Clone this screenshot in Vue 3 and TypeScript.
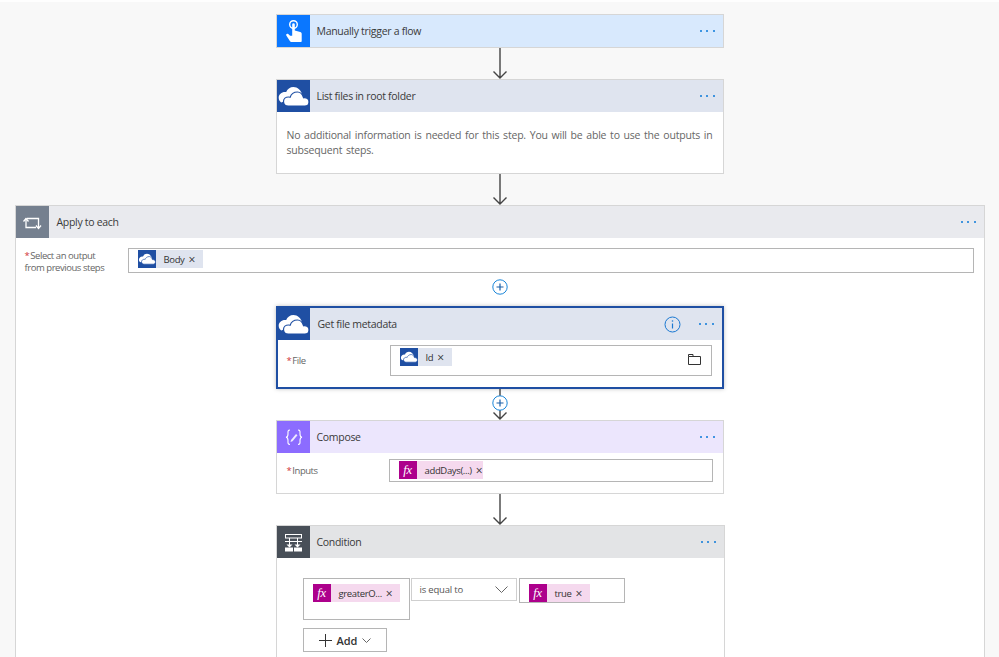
<script setup lang="ts">
const dots = [1, 2, 3]
</script>

<template>
  <div class="page">
    <svg class="defs" width="0" height="0">
      <symbol id="cloud" viewBox="0 0 33 33">
        <path d="M16.500 7c-3.400 0-6.300 2-7.300 5-.4-.1-.8-.1-1.200-.1-3.600 0-6.300 2.500-6.300 5.800 0 2 1 3.700 2.500 4.800l13.500-5 7.500-3c-1-4-4.700-7.500-8.700-7.500z" fill="#fff" />
        <path d="M20.500 12c-3.600 0-6.500 2.300-7.400 5.300-.5-.2-1-.3-1.600-.3-2.800 0-5 2-5 4.500 0 2.700 2 4.500 4.700 4.500h16.600c2.600 0 4.200-1.900 4.200-4.100 0-2.500-1.900-4.300-4.700-4.300-.3 0-.6 0-.8.1-1-3.300-3.100-5.700-6-5.700z" fill="#fff" stroke="currentColor" stroke-width="1.200" />
      </symbol>
    </svg>

    <section class="card trigger short">
      <header class="head">
        <span class="icon">
          <svg viewBox="0 0 33 33" width="33" height="33">
            <circle cx="16.500" cy="9.500" r="3.800" fill="none" stroke="#fff" stroke-width="1.400" />
            <path d="M15.200 9.500a1.300 1.300 0 0 1 2.600 0v6l5.400 1.500c1 .3 1.500 1 1.500 2V26c0 .6-.4 1-1 1h-9.500c-.4 0-.7-.2-1-.5l-3.900-6c-.6-1.100.8-2.300 1.900-1.400l1.900 1.600 2.100 0z" fill="#fff" />
          </svg>
        </span>
        <span class="title">Manually trigger a flow</span>
        <span class="dots"><i v-for="d in dots" :key="d"></i></span>
      </header>
    </section>

    <div class="link">
      <svg width="16" height="31" viewBox="0 0 16 31"><path d="M8 0v30M1.500 23.500 8 30l6.500-6.500" fill="none" stroke="#444" stroke-width="1.400" /></svg>
    </div>

    <section class="card onedrive">
      <header class="head">
        <span class="icon"><svg width="33" height="33"><use href="#cloud" /></svg></span>
        <span class="title">List files in root folder</span>
        <span class="dots"><i v-for="d in dots" :key="d"></i></span>
      </header>
      <p class="note">No additional information is needed for this step. You will be able to use the outputs in subsequent steps.</p>
    </section>

    <div class="link">
      <svg width="16" height="31" viewBox="0 0 16 31"><path d="M8 0v30M1.500 23.500 8 30l6.500-6.500" fill="none" stroke="#444" stroke-width="1.400" /></svg>
    </div>

    <section class="card loop">
      <header class="head">
        <span class="icon">
          <svg viewBox="0 0 33 33" width="33" height="33">
            <path d="M10 12.500V21.500H20M11 12.500H22.500V22" fill="none" stroke="#fff" stroke-width="1.300" />
            <path d="M7.500 15.500 10 12.500l2.500 3M20 19.500l2.500 3 2.500-3" fill="none" stroke="#fff" stroke-width="1.300" />
          </svg>
        </span>
        <span class="title">Apply to each</span>
        <span class="dots"><i v-for="d in dots" :key="d"></i></span>
      </header>

      <div class="row">
        <label class="lab"><b>*</b>Select an output<br />from previous steps</label>
        <div class="field body-field">
          <span class="chip blue">
            <span class="chip-icon"><svg width="18" height="18" viewBox="0 0 33 33"><use href="#cloud" /></svg></span>
            <span class="chip-text">Body</span><span class="x">×</span>
          </span>
        </div>
      </div>

      <div class="plus first">
        <svg width="16" height="16" viewBox="0 0 16 16"><circle cx="8" cy="8" r="7.200" fill="#fff" stroke="#1a86d9" /><path d="M8 4.500v7M4.500 8h7" stroke="#1a5fa8" stroke-width="1.200" /></svg>
      </div>

      <section class="card onedrive selected">
        <header class="head">
          <span class="icon"><svg width="33" height="33"><use href="#cloud" /></svg></span>
          <span class="title">Get file metadata</span>
          <svg class="info" width="17" height="17" viewBox="0 0 17 17"><circle cx="8.500" cy="8.500" r="7.500" fill="none" stroke="#1a78d2" stroke-width="1" /><path d="M8.500 7.500v5" stroke="#1a78d2" stroke-width="1.200" /><circle cx="8.500" cy="5" r=".8" fill="#1a78d2" /></svg>
          <span class="dots"><i v-for="d in dots" :key="d"></i></span>
        </header>
        <div class="row">
          <label class="lab"><b>*</b>File</label>
          <div class="field file-field">
            <span class="chip blue">
              <span class="chip-icon"><svg width="18" height="18" viewBox="0 0 33 33"><use href="#cloud" /></svg></span>
              <span class="chip-text">Id</span><span class="x">×</span>
            </span>
            <svg class="folder" width="13" height="11" viewBox="0 0 13 11"><path d="M.5 2.500h12v8H.5zM.5 2.500V.5h4.500v2" fill="none" stroke="#333" /></svg>
          </div>
        </div>
      </section>

      <div class="link with-plus">
        <svg width="16" height="31" viewBox="0 0 16 31"><path d="M8 0v30M1.500 23.500 8 30l6.500-6.500" fill="none" stroke="#444" stroke-width="1.400" /></svg>
        <svg class="mid-plus" width="16" height="16" viewBox="0 0 16 16"><circle cx="8" cy="8" r="7.200" fill="#fff" stroke="#1a86d9" /><path d="M8 4.500v7M4.500 8h7" stroke="#1a5fa8" stroke-width="1.200" /></svg>
      </div>

      <section class="card compose">
        <header class="head">
          <span class="icon">
            <svg viewBox="0 0 33 33" width="33" height="33">
              <g transform="translate(.5 -.5)">
                <path d="M12.500 9.500c-2.500 0-2 2-2 4s-.3 3-2 3.200c1.700.2 2 1.200 2 3.200s-.5 4 2 4M20.500 9.500c2.500 0 2 2 2 4s.3 3 2 3.200c-1.700.2-2 1.200-2 3.200s.5 4-2 4" fill="none" stroke="#fff" stroke-width="1.100" />
                <path d="M13.500 19.500l5-6 1.500 1.300-5 6-2 .7z" fill="#fff" opacity=".85" />
              </g>
            </svg>
          </span>
          <span class="title">Compose</span>
          <span class="dots"><i v-for="d in dots" :key="d"></i></span>
        </header>
        <div class="row">
          <label class="lab"><b>*</b>Inputs</label>
          <div class="field inputs-field">
            <span class="chip pink">
              <span class="chip-icon fx">fx</span>
              <span class="chip-text">addDays(...)</span><span class="x tight">×</span>
            </span>
          </div>
        </div>
      </section>

      <div class="link">
        <svg width="16" height="31" viewBox="0 0 16 31"><path d="M8 0v30M1.500 23.500 8 30l6.500-6.500" fill="none" stroke="#444" stroke-width="1.400" /></svg>
      </div>

      <section class="card condition">
        <header class="head">
          <span class="icon">
            <svg viewBox="0 0 33 33" width="33" height="33">
              <rect x="8.500" y="8.500" width="16" height="3.500" fill="none" stroke="#fff" />
              <path d="M12.500 12v7M20.500 12v7M8 15.500h17" fill="none" stroke="#fff" />
              <path d="M9.500 18.500h6l-3 3zM17.500 18.500h6l-3 3z" fill="#fff" />
              <rect x="8" y="21.500" width="8" height="4" fill="#fff" />
              <rect x="17" y="21.500" width="8" height="4" fill="#fff" />
            </svg>
          </span>
          <span class="title">Condition</span>
          <span class="dots"><i v-for="d in dots" :key="d"></i></span>
        </header>
        <div class="rule">
          <div class="cell tall">
            <span class="chip pink">
              <span class="chip-icon fx">fx</span>
              <span class="chip-text">greaterO...</span><span class="x">×</span>
            </span>
          </div>
          <div class="select">
            <span>is equal to</span>
            <svg width="13" height="7" viewBox="0 0 13 7"><path d="M.5.500l6 6 6-6" fill="none" stroke="#666" /></svg>
          </div>
          <div class="cell">
            <span class="chip pink">
              <span class="chip-icon fx">fx</span>
              <span class="chip-text">true</span><span class="x">×</span>
            </span>
          </div>
        </div>
        <button class="add" type="button">
          <svg width="13" height="13" viewBox="0 0 13 13"><path d="M6.500 0v13M0 6.500h13" stroke="#333" /></svg>
          <span>Add</span>
          <svg width="9" height="5" viewBox="0 0 9 5"><path d="M.5.500l4 4 4-4" fill="none" stroke="#666" /></svg>
        </button>
      </section>
    </section>
  </div>
</template>

<style>
html,
body {
  margin: 0;
  overflow: hidden;
}
</style>

<style scoped>
.page {
  box-sizing: border-box;
  width: 999px;
  height: 657px;
  overflow: hidden;
  padding-top: 12px;
  border-top: 2px solid #fefefe;
  background: #f8f8f8;
  display: flex;
  flex-direction: column;
  align-items: center;
  font-family: "Open Sans", "Liberation Sans", sans-serif;
  color: #333;
}
.defs {
  position: absolute;
}
.card {
  box-sizing: border-box;
  flex: none;
  width: 448px;
  background: #fff;
  border: 1px solid #d6d6d6;
}
.head {
  display: flex;
  align-items: center;
  height: 32px;
}
.icon {
  flex: none;
  width: 33px;
  height: 32px;
  color: #1f4fa3;
  overflow: hidden;
}
.icon svg {
  display: block;
}
.title {
  flex: 1;
  margin-left: 7px;
  font-size: 10.500px;
  letter-spacing: -0.3px;
  color: #3a3a3a;
}
.loop > .head .title,
.selected .title {
  margin-left: 8px;
}
.info {
  flex: none;
  margin-right: 18px;
}
.dots {
  display: flex;
  gap: 4.300px;
  margin-right: 8px;
}
.dots i {
  width: 2px;
  height: 2px;
  border-radius: 50%;
  background: #0a78d8;
}
.trigger .head {
  background: #d8e9fd;
}
.trigger .icon {
  background: #0a77ff;
}
.onedrive .head {
  background: #dfe4ef;
}
.onedrive .icon {
  background: #1f4fa3;
}
.note {
  margin: 0;
  padding: 16px 10px 0;
  height: 61px;
  box-sizing: border-box;
  font-size: 10.500px;
  line-height: 14.500px;
  letter-spacing: -0.2px;
  word-spacing: 1.200px;
  text-align: justify;
  color: #666;
}
.loop {
  width: 970px;
  flex: none;
  display: flex;
  flex-direction: column;
  align-items: center;
}
.loop > .head {
  align-self: stretch;
  background: #e9eaee;
}
.loop > .head .icon {
  background: #75808f;
}
.row {
  align-self: stretch;
  display: flex;
  padding: 10px 10px 0 9px;
}
.lab {
  flex: 0 0 103px;
  font-size: 9.500px;
  line-height: 11.500px;
  letter-spacing: -0.45px;
  color: #666;
  padding-top: 2px;
}
.lab b {
  color: #d13438;
  font-weight: 400;
  margin-right: 1px;
}
.field {
  flex: 1;
  box-sizing: border-box;
  display: flex;
  align-items: flex-start;
  border: 1px solid #b5b5b5;
  background: #fff;
  padding: 1px 9px;
}
.body-field {
  height: 25px;
}
.chip {
  display: inline-flex;
  align-items: center;
  height: 18px;
  font-size: 9.500px;
  letter-spacing: -0.35px;
  color: #333;
}
.chip.blue {
  background: #dfe4ef;
}
.chip.pink {
  background: #f5d9ee;
}
.chip-icon {
  flex: none;
  width: 18px;
  height: 18px;
  background: #1f4fa3;
  color: #1f4fa3;
}
.chip-icon svg {
  display: block;
}
.chip-icon.fx {
  background: #ad008c;
  color: #fff;
  font: italic 12.500px/18px "Liberation Serif", serif;
  text-align: center;
}
.chip-text {
  margin-left: 8px;
}
.x {
  margin: 1px 8px 0 4px;
  font-size: 12px;
  line-height: 1;
}
.x.tight {
  margin-right: 1px;
}
.plus {
  flex: none;
  height: 16px;
  margin: 6px 0 11px;
}
.plus svg,
.link svg {
  display: block;
}
.selected {
  border: 2px solid #1f4fa3;
  box-shadow: 0 0 4px rgba(0, 0, 0, 0.25);
  height: 83px;
}
.selected .icon {
  height: 32px;
  margin-left: -1px;
}
.selected .row {
  padding: 5px 10px 0 9px;
}
.selected .lab,
.compose .lab {
  align-self: center;
  padding-top: 0;
}
.file-field {
  height: 31px;
  padding-top: 2px;
  position: relative;
}
.folder {
  position: absolute;
  right: 10px;
  top: 8px;
}
.link {
  flex: none;
  position: relative;
  height: 31px;
}
.mid-plus {
  position: absolute;
  left: 0;
  top: 6px;
}
.compose .head {
  background: #ece6fd;
}
.compose .icon {
  background: #8c6cff;
}
.compose {
  height: 74px;
}
.compose .row {
  padding: 6px 10px 0 10px;
}
.compose .lab {
  flex-basis: 102px;
}
.inputs-field {
  height: 23px;
}
.condition {
  width: 449px;
  margin-left: 1px;
  flex: none;
  padding-bottom: 40px;
}
.condition .head {
  background: #e3e4e6;
}
.condition .icon {
  background: #484f58;
}
.rule {
  display: flex;
  align-items: flex-start;
  gap: 1px;
  padding: 20px 0 0 26px;
}
.cell {
  box-sizing: border-box;
  width: 106px;
  height: 25px;
  margin-left: 1px;
  border: 1px solid #b5b5b5;
  background: #fff;
  padding: 1px 9px;
}
.cell.tall {
  width: 107px;
  height: 42px;
  margin-left: 0;
}
.select {
  box-sizing: border-box;
  width: 106px;
  height: 23px;
  display: flex;
  align-items: center;
  justify-content: space-between;
  border: 1px solid #cfcfcf;
  padding: 0 8px;
  font-size: 9.500px;
  letter-spacing: -0.2px;
  color: #555;
}
.add {
  box-sizing: border-box;
  display: flex;
  align-items: center;
  gap: 5px;
  width: 84px;
  height: 24px;
  margin: 8px 0 0 26px;
  padding: 0 0 0 15px;
  background: #fff;
  border: 1px solid #b5b5b5;
  font-family: inherit;
  font-size: 11px;
  font-weight: 600;
  color: #333;
}
</style>
